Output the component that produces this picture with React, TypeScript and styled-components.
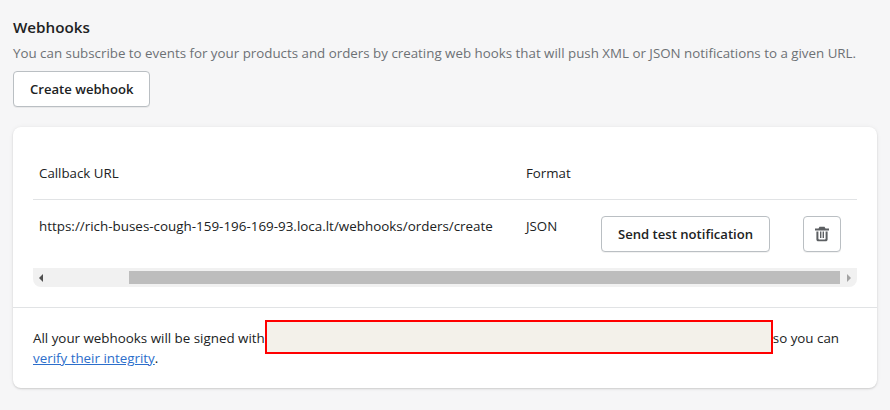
import React from "react";
import styled, { createGlobalStyle } from "styled-components";

const GlobalStyle = createGlobalStyle`
    html, body {
        margin: 0;
        padding: 0;
        background: #f6f6f7;
    }
    body {
        font-family: "Open Sans", "Noto Sans", sans-serif;
        font-size: 14px;
        line-height: 20px;
        color: #202223;
    }
`;

const Page = styled.div`
    width: 890px;
    height: 410px;
    box-sizing: border-box;
    padding: 17px 13px 0;
    overflow: hidden;
`;

const Title = styled.h2`
    margin: 0;
    font-size: 15.2px;
    font-weight: 600;
    line-height: 20px;
`;

const Subtitle = styled.p`
    margin: 6px 0 8px;
    color: #6d7175;
    font-size: 13.34px;
    white-space: nowrap;
`;

const Button = styled.button`
    box-sizing: border-box;
    height: 36px;
    padding: 0 16px;
    background: #fff;
    border: 1px solid #babfc3;
    border-radius: 4px;
    box-shadow: 0 1px 0 rgba(0, 0, 0, 0.05);
    color: #202223;
    font-family: inherit;
    font-size: 13.1px;
    font-weight: 600;
    white-space: nowrap;
`;

const IconButton = styled(Button)`
    width: 38px;
    padding: 0;
    display: flex;
    align-items: center;
    justify-content: center;
`;

const Card = styled.section`
    margin-top: 20px;
    width: 864px;
    height: 261px;
    background: #fff;
    border-radius: 8px;
    box-shadow: 0 0 5px rgba(23, 24, 24, 0.05), 0 1px 2px rgba(0, 0, 0, 0.15);
`;

const TableArea = styled.div`
    padding: 20px 20px 20px;
    border-bottom: 1px solid #e1e3e5;
`;

const Row = styled.div<{ $head?: boolean }>`
    display: grid;
    grid-template-columns: 487px 75px 202px 60px;
    height: ${(p) => (p.$head ? "53px" : "68px")};
    box-sizing: border-box;
    border-bottom: ${(p) => (p.$head ? "1px solid #e1e3e5" : "none")};
    align-items: ${(p) => (p.$head ? "center" : "start")};
    padding-top: ${(p) => (p.$head ? "0" : "16px")};
`;

const Cell = styled.div`
    padding-left: 6px;
    font-size: 13.3px;
    white-space: nowrap;
`;

const UrlCell = styled(Cell)`
    font-size: 13.42px;
`;

const ButtonCell = styled(Cell)`
    display: flex;
`;

const ScrollBar = styled.div`
    height: 19px;
    display: flex;
    align-items: center;
    background: #f1f1f1;
    border-radius: 0 0 8px 8px;
`;

const ScrollArrow = styled.span<{ $right?: boolean }>`
    flex: none;
    width: 0;
    height: 0;
    margin: ${(p) => (p.$right ? "0 6px 0 7px" : "0 6px 0 6px")};
    border-top: 4px solid transparent;
    border-bottom: 4px solid transparent;
    ${(p) =>
        p.$right
            ? "border-left: 4px solid #a3a3a3;"
            : "border-right: 4px solid #505050;"}
`;

const ScrollTrack = styled.div`
    flex: 1;
    height: 13px;
    padding-left: 80px;
`;

const ScrollThumb = styled.div`
    height: 100%;
    background: #bdbdbd;
`;

const Footer = styled.div`
    padding: 20px 20px 0;
    font-size: 13.36px;
    line-height: 20px;
`;

const Redacted = styled.span`
    display: inline-block;
    box-sizing: border-box;
    width: 508px;
    height: 34px;
    margin: -12px 0 -8px 0;
    vertical-align: middle;
    background: #f3f1ea;
    border: 2px solid #f00;
`;

const Link = styled.a`
    color: #2c6ecb;
    text-decoration: underline;
`;

const TrashIcon = () => (
    <svg width="16" height="16" viewBox="0 0 16 16" fill="#5c5f62">
        <path d="M5.5 0.8h5l1 1.7H15v1.9H1V2.5h3.5z" />
        <path d="M2.4 5.4h2v7.3c0 .5.3.8.8.8h5.600c.5 0 .8-.3.8-.8V5.400h2v8c0 1.100-.8 1.900-1.900 1.900H4.300c-1.100 0-1.900-.8-1.900-1.900z" />
        <path d="M6 5.400h1.400v6.700H6zM8.600 5.400H10v6.700H8.600z" />
    </svg>
);

const App: React.FC = () => {
    return (
        <Page>
            <GlobalStyle />
            <Title>Webhooks</Title>
            <Subtitle>
                You can subscribe to events for your products and orders by creating web hooks that will push XML or JSON notifications to a given URL.
            </Subtitle>
            <Button>Create webhook</Button>
            <Card>
                <TableArea>
                    <Row $head>
                        <Cell>Callback URL</Cell>
                        <Cell>Format</Cell>
                    </Row>
                    <Row>
                        <UrlCell>https://rich-buses-cough-159-196-169-93.loca.lt/webhooks/orders/create</UrlCell>
                        <Cell>JSON</Cell>
                        <ButtonCell>
                            <Button>Send test notification</Button>
                        </ButtonCell>
                        <ButtonCell>
                            <IconButton aria-label="Delete">
                                <TrashIcon />
                            </IconButton>
                        </ButtonCell>
                    </Row>
                    <ScrollBar>
                        <ScrollArrow />
                        <ScrollTrack>
                            <ScrollThumb />
                        </ScrollTrack>
                        <ScrollArrow $right />
                    </ScrollBar>
                </TableArea>
                <Footer>
                    All your webhooks will be signed with<Redacted />so you can <Link href="#">verify their integrity</Link>.
                </Footer>
            </Card>
        </Page>
    );
};

export default App;
